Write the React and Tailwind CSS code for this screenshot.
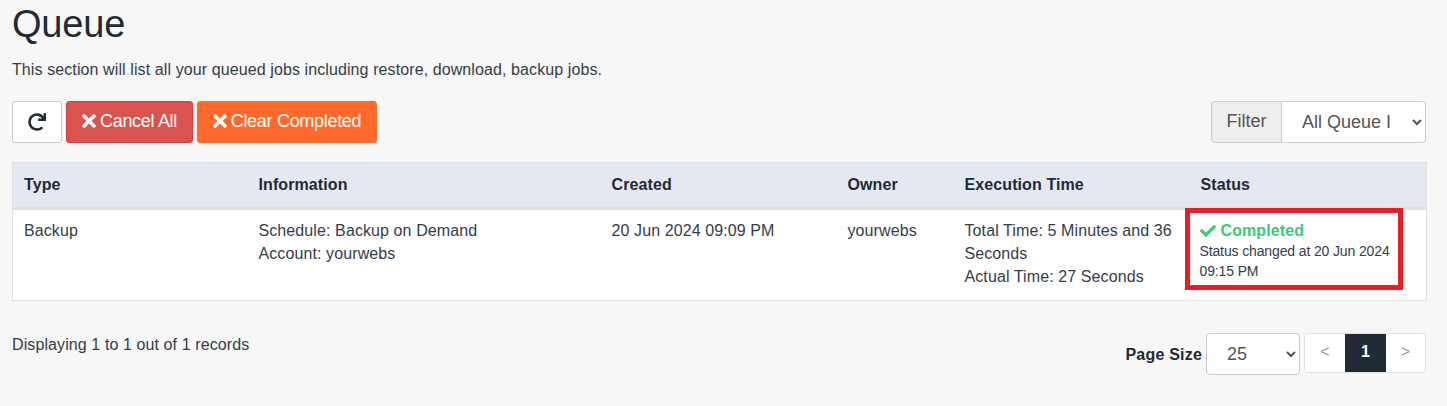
import { FaCheck, FaRedo, FaTimes } from "react-icons/fa";

const columns = [
  { label: "Type", width: "w-[235px]" },
  { label: "Information", width: "w-[353px]" },
  { label: "Created", width: "w-[236px]" },
  { label: "Owner", width: "w-[117px]" },
  { label: "Execution Time", width: "w-[236px]" },
  { label: "Status", width: "w-[237px]" },
];

export default function App() {
  return (
    <div className="min-h-[406px] bg-[#f7f7f7] pl-3 font-['Liberation_Sans',Arial,sans-serif] text-[#212b36] overflow-hidden">
      <div className="w-[1414px]">
        <h1 className="text-[38px] leading-[40px] tracking-[-0.2px] pt-[4px] text-[#212b36]">Queue</h1>
        <p className="mt-[16px] text-[16px] leading-5 tracking-[0.1px] text-[#333d47]">
          This section will list all your queued jobs including restore, download, backup jobs.
        </p>

        {/* Toolbar */}
        <div className="mt-[21px] flex items-center justify-between">
          <div className="flex gap-1">
            <button className="flex h-[42px] w-[50px] items-center justify-center rounded-[3px] border border-[#ccc] bg-white text-[#212b36]">
              <FaRedo className="h-[18px] w-[18px]" />
            </button>
            <button className="flex h-[42px] w-[127px] items-center justify-center gap-[4px] rounded-[3px] border border-[#d43f3a] bg-[#d9534f] pb-[2px] text-[18px] tracking-[-0.3px] text-white">
              <FaTimes className="h-[20px] w-[14px]" />
              Cancel All
            </button>
            <button className="flex h-[42px] w-[180px] items-center justify-center gap-[4px] rounded-[3px] border border-[#ff6a2a] bg-[#ff6a2a] pb-[2px] text-[18px] tracking-[-0.3px] text-white">
              <FaTimes className="h-[20px] w-[14px]" />
              Clear Completed
            </button>
          </div>
          <div className="flex h-[42px] w-[215px]">
            <span className="flex w-[71px] items-center justify-center rounded-l-[4px] border border-[#ccc] bg-[#eee] pb-[2px] text-[18px] text-[#555]">
              Filter
            </span>
            <select className="w-[144px] rounded-r-[4px] border border-l-0 border-[#ccc] bg-white pl-4 pr-[18px] text-[18px] text-[#555]">
              <option>All Queue Items</option>
            </select>
          </div>
        </div>

        {/* Jobs table */}
        <table className="mt-[19px] w-[1414px] table-fixed border border-[#dee2e6] bg-white text-[16px] leading-[23px] tracking-[0.1px]">
          <thead>
            <tr className="h-[46px] border-b-[3px] border-[#dcdfe3] bg-[#e4e9f1]">
              {columns.map((c) => (
                <th key={c.label} className={`${c.width} px-[11px] pb-[2px] text-left font-bold`}>
                  {c.label}
                </th>
              ))}
            </tr>
          </thead>
          <tbody>
            <tr className="align-top text-[#333d47]">
              <td className="px-[11px] pt-[9px]">Backup</td>
              <td className="px-[11px] pt-[9px]">
                Schedule: Backup on Demand
                <br />
                Account: yourwebs
              </td>
              <td className="px-[11px] pt-[9px]">20 Jun 2024 09:09 PM</td>
              <td className="px-[11px] pt-[9px]">yourwebs</td>
              <td className="px-[11px] pt-[9px] pb-[12px]">
                Total Time: 5 Minutes and 36 Seconds
                <br />
                Actual Time: 27 Seconds
              </td>
              <td className="relative pl-[10px] pr-[11px] pt-[9px]">
                <div className="flex items-center gap-[5px] font-bold text-[#3cc878]">
                  <FaCheck className="h-[16px] w-[16px]" />
                  Completed
                </div>
                <div className="-mt-px text-[14px] leading-[20px] tracking-[-0.13px]">
                  Status changed at 20 Jun 2024 09:15 PM
                </div>
                {/* Red highlight over the cell */}
                <div className="absolute left-[-5px] top-[-2px] h-[82px] w-[218px] border-[5px] border-[#ed1c24]" />
              </td>
            </tr>
          </tbody>
        </table>

        {/* Footer */}
        <div className="mt-[32px] flex items-start justify-between">
          <p className="mt-[2px] text-[16px] leading-5 tracking-[0.1px] text-[#333d47]">
            Displaying 1 to 1 out of 1 records
          </p>
          <div className="flex items-center">
            <span className="mr-1 pt-[2px] text-[16px] font-bold tracking-[0.2px]">Page Size</span>
            <select className="h-[42px] w-[94px] rounded-[4px] border border-[#ccc] bg-white pl-4 text-[18px] text-[#555]">
              <option>25</option>
            </select>
            <div className="ml-[4px] flex h-[40px] self-start overflow-hidden rounded-[4px] border border-[#dee2e6] bg-white">
              <span className="flex w-[40px] items-center justify-center pb-[2px] text-[16px] text-[#999]">&lt;</span>
              <span className="flex w-[41px] items-center justify-center bg-[#212b36] pb-[2px] text-[16px] font-bold text-white">1</span>
              <span className="flex w-[39px] items-center justify-center pb-[2px] text-[16px] text-[#999]">&gt;</span>
            </div>
          </div>
        </div>
      </div>
    </div>
  );
}
